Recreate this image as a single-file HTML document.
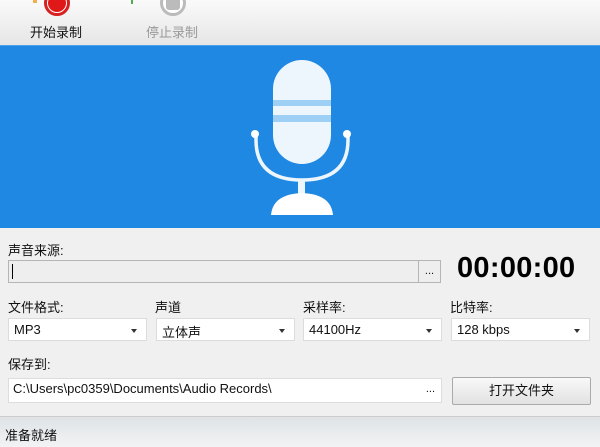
<!DOCTYPE html>
<html><head><meta charset="utf-8"><style>
*{margin:0;padding:0;box-sizing:border-box}
body{width:600px;height:447px;overflow:hidden;background:#f0f0f0;font-family:"Liberation Sans","Noto Sans CJK SC",sans-serif;font-size:13px;color:#111;position:relative}
.a{position:absolute}
.top{left:0;top:0;width:600px;height:45px;background:linear-gradient(#fafafa,#e6e6e6)}
.blue{left:0;top:45px;width:600px;height:183px;background:#1e88e3;border-top:1px solid #4aa0ea}
.inp{background:#fff;border:1px solid #b5b5b5}
.sel{background:#fff;border:1px solid #dcdcdc;padding:3px 5px;font-size:13px}
.sel:after{content:"";position:absolute;right:9px;top:10px;border:3px solid transparent;border-top:4px solid #333}
.dots{background:#eee;border:1px solid #b5b5b5;text-align:center;font-size:11px;line-height:20px}
.status{left:0;top:416px;width:600px;height:31px;background:linear-gradient(#dfe3e6,#f2f3f4);border-top:1px solid #ccc}
</style></head><body>
<div class="a top"></div>
<div class="a" style="left:44px;top:-10px;width:26px;height:26px;border-radius:50%;border:3px solid #d92020;background:#fff"></div>
<div class="a" style="left:48px;top:-6px;width:18px;height:18px;border-radius:50%;background:#e01818"></div>
<div class="a" style="left:33px;top:0;width:4px;height:3px;background:#f0b050"></div>
<div class="a" style="left:131px;top:0;width:2px;height:4px;background:#5a5"></div>
<div class="a" style="left:160px;top:-10px;width:26px;height:26px;border-radius:50%;border:3px solid #bbb;background:#fff"></div>
<div class="a" style="left:166px;top:-4px;width:14px;height:14px;border-radius:3px;background:#bbb"></div>
<div class="a" style="left:30px;top:22px;font-size:13px">开始录制</div>
<div class="a" style="left:146px;top:22px;font-size:13px;color:#999">停止录制</div>
<div class="a blue"></div>
<svg class="a" style="left:0;top:45px" width="600" height="183">
<rect x="273" y="15" width="58" height="104" rx="29" fill="#eef6fd"/>
<rect x="273" y="55" width="58" height="6" fill="#9ed0f5"/>
<rect x="273" y="70" width="58" height="7" fill="#9ed0f5"/>
<path d="M256 89 V95 Q256 135 302 135 Q348 135 348 95 V89" fill="none" stroke="#eef6fd" stroke-width="3.5"/>
<circle cx="255" cy="89" r="4" fill="#fff"/><circle cx="347" cy="89" r="4" fill="#fff"/>
<rect x="298" y="134" width="7" height="16" fill="#eef6fd"/>
<path d="M271 170 Q273 149 302 148 Q331 149 333 170 Z" fill="#fff"/>
</svg>
<div class="a" style="left:8px;top:240px">声音来源:</div>
<div class="a inp" style="left:8px;top:260px;width:411px;height:23px;background:#eee"><div style="position:absolute;left:3px;top:3px;width:1px;height:15px;background:#000"></div></div>
<div class="a dots" style="left:418px;top:260px;width:23px;height:23px">...</div>
<div class="a" style="left:457px;top:252px;font-size:29px;font-weight:bold;color:#000;letter-spacing:0.3px">00:00:00</div>
<div class="a" style="left:8px;top:297px">文件格式:</div>
<div class="a" style="left:155px;top:297px">声道</div>
<div class="a" style="left:303px;top:297px">采样率:</div>
<div class="a" style="left:450px;top:297px">比特率:</div>
<div class="a sel" style="left:8px;top:318px;width:139px;height:23px">MP3</div>
<div class="a sel" style="left:156px;top:318px;width:139px;height:23px">立体声</div>
<div class="a sel" style="left:303px;top:318px;width:139px;height:23px">44100Hz</div>
<div class="a sel" style="left:451px;top:318px;width:139px;height:23px">128 kbps</div>
<div class="a" style="left:8px;top:354px">保存到:</div>
<div class="a inp" style="left:8px;top:378px;width:434px;height:25px;border-color:#ddd;padding:2px 4px">C:\Users\pc0359\Documents\Audio Records\<span style="position:absolute;right:6px;top:4px;font-size:11px">...</span></div>
<div class="a" style="left:452px;top:377px;width:139px;height:28px;border:1px solid #aaa;border-radius:2px;background:linear-gradient(#f8f8f8,#e2e2e2);text-align:center;line-height:26px">打开文件夹</div>
<div class="a status"></div>
<div class="a" style="left:5px;top:425px">准备就绪</div>
</body></html>
